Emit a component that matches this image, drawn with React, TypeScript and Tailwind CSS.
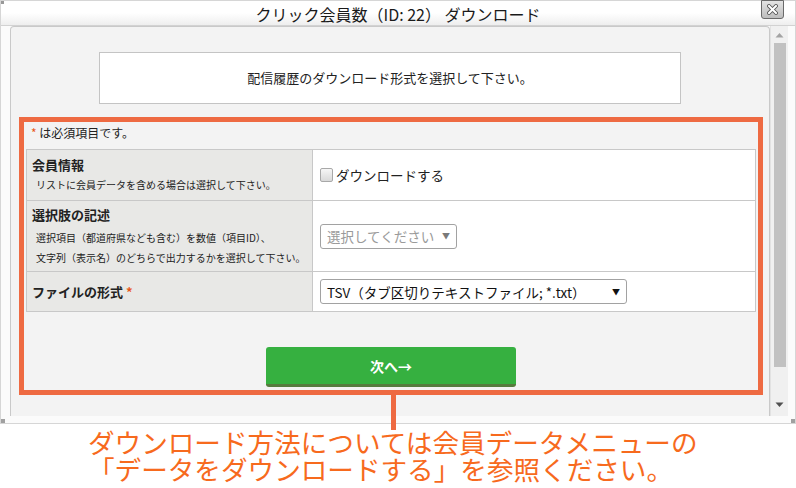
import React from "react";

export default function App() {
  return (
    <div className="w-[796px] h-[488px] bg-white relative overflow-hidden font-['Noto_Sans_CJK_JP','Noto_Sans',sans-serif] text-[#222]">
      {/* window */}
      <div className="relative h-[424px] border border-[#d6d6d6] bg-[#fbfbfb] flex flex-col">
        <div className="absolute left-0 top-0 w-[3px] h-[3px] bg-[#999]" />
        {/* title bar */}
        <div className="h-[25px] shrink-0 bg-gradient-to-b from-white via-white to-[#eeeeee] border-b border-[#d2d2d2] flex items-center justify-center">
          <span className="text-[16px] leading-[18px] mt-[2px] text-[#1a1a1a]">クリック会員数（ID: 22） ダウンロード</span>
        </div>
        {/* close button */}
        <div className="absolute top-[-1px] right-[11px] w-[23px] h-[19px] border border-[#6a6a6a] rounded-b-[3px] bg-gradient-to-b from-[#e4e4e4] to-[#bdbdbd] flex items-center justify-center">
          <svg width="11" height="11" viewBox="0 0 11 11">
            <path d="M2 2 L9 9 M9 2 L2 9" stroke="#555" strokeWidth="3.8" strokeLinecap="square" />
            <path d="M2 2 L9 9 M9 2 L2 9" stroke="#ffffff" strokeWidth="2" strokeLinecap="square" />
          </svg>
        </div>
        {/* body */}
        <div className="flex pl-[9px] h-[390px] shrink-0">
          {/* panel */}
          <div className="w-[760px] h-[390px] border-l border-t border-r border-[#c9c9c9] rounded-t-[4px] bg-[#f3f3f3] flex flex-col">
            <div className="mt-[25px] mx-auto w-[582px] h-[52px] bg-white border border-[#c4c4c4] flex items-center justify-center">
              <span className="text-[13px] leading-[16px]">配信履歴のダウンロード形式を選択して下さい。</span>
            </div>
            <div className="mt-[13px] ml-[8px] w-[744px] h-[278px] border-[5px] border-[#ee6a42] flex flex-col px-[2px]">
              <div className="mt-[2px] h-[18px] pl-[5px] text-[12px] leading-[18px]">
                <span className="text-[#e8591a]">*</span> は必須項目です。
              </div>
              {/* table */}
              <div className="mt-[7px] border-t border-l border-[#c8c8c8] grid grid-cols-[286px_1fr]">
                <div className="h-[51px] bg-[#e8e8e6] border-r border-b border-[#c8c8c8] pl-[5px] pt-[6px]">
                  <div className="text-[13px] leading-[18px] font-bold">会員情報</div>
                  <div className="mt-[4px] pl-[4px] text-[10px] leading-[14px]">リストに会員データを含める場合は選択して下さい。</div>
                </div>
                <div className="h-[51px] bg-white border-r border-b border-[#c8c8c8] pl-[7px] flex items-center">
                  <span className="w-[13px] h-[14px] rounded-[2px] border border-[#a8a8a8] bg-gradient-to-b from-[#f6f6f6] to-[#d9d9d9]" />
                  <span className="ml-[3px] text-[13.5px] leading-[18px]">ダウンロードする</span>
                </div>
                <div className="h-[71px] bg-[#e8e8e6] border-r border-b border-[#c8c8c8] pl-[5px] pt-[5px]">
                  <div className="text-[13px] leading-[18px] font-bold">選択肢の記述</div>
                  <div className="mt-[4px] pl-[4px] text-[10px] leading-[20px]">選択項目（都道府県なども含む）を数値（項目ID）、</div>
                  <div className="pl-[4px] text-[10px] leading-[20px]">文字列（表示名）のどちらで出力するかを選択して下さい。</div>
                </div>
                <div className="h-[71px] bg-white border-r border-b border-[#c8c8c8] pl-[7px] flex items-center">
                  <div className="w-[137px] h-[25px] border border-[#a2a2a2] rounded-[3px] bg-white flex items-center pl-[6px] pr-[6px]">
                    <span className="text-[13.5px] leading-[18px] text-[#9a9a9a] flex-1">選択してください</span>
                    <span className="text-[8px] leading-[10px] text-[#7a7a7a]">▼</span>
                  </div>
                </div>
                <div className="h-[40px] bg-[#e8e8e6] border-r border-b border-[#c8c8c8] pl-[5px] flex items-center">
                  <span className="text-[13px] leading-[18px] font-bold">ファイルの形式 <span className="text-[#e8591a]">*</span></span>
                </div>
                <div className="h-[40px] bg-white border-r border-b border-[#c8c8c8] pl-[7px] flex items-center">
                  <div className="w-[307px] h-[25px] border border-[#a2a2a2] rounded-[3px] bg-white flex items-center pl-[6px] pr-[6px]">
                    <span className="text-[13.5px] leading-[18px] text-[#111] flex-1">TSV（タブ区切りテキストファイル; *.txt）</span>
                    <span className="text-[8px] leading-[10px] text-[#111]">▼</span>
                  </div>
                </div>
              </div>
              {/* button */}
              <div className="mt-[35px] mx-auto w-[250px] h-[40px] rounded-[3px] bg-[#36b040] border-b-[3px] border-[#567b3e] flex items-center justify-center">
                <span className="text-white text-[14px] leading-[18px] font-bold">次へ→</span>
              </div>
            </div>
          </div>
          {/* scrollbar */}
          <div className="w-[18px] h-[390px] bg-[#f0f0f0] border-l border-[#e2e2e2] flex flex-col items-center">
            <svg width="9" height="6" viewBox="0 0 9 6" className="mt-[6px]">
              <path d="M0.5 5.5 L4.5 1 L8.5 5.5 Z" fill="#a3a3a3" />
            </svg>
            <div className="mt-[5px] w-[12px] h-[324px] bg-[#c1c1c1]" />
            <div className="flex-1" />
            <svg width="9" height="6" viewBox="0 0 9 6" className="mb-[8px]">
              <path d="M0.5 0.5 L4.5 5 L8.5 0.5 Z" fill="#505050" />
            </svg>
          </div>
        </div>
        <div className="absolute left-0 bottom-0 w-[4px] h-[4px] bg-[#a0a0a0]" />
        <div className="absolute right-0 bottom-0 w-[4px] h-[4px] bg-[#a0a0a0]" />
      </div>
      {/* connector */}
      <div className="absolute left-[391px] top-[394px] w-[5px] h-[36px] bg-[#ee6a42]" />
      {/* annotation */}
      <div className="pl-[88px] pt-[5px] text-[26.6px] leading-[26.5px] text-[#f76a1d]">
        <div>ダウンロード方法については会員データメニューの</div>
        <div>「データをダウンロードする」を参照ください。</div>
      </div>
    </div>
  );
}
